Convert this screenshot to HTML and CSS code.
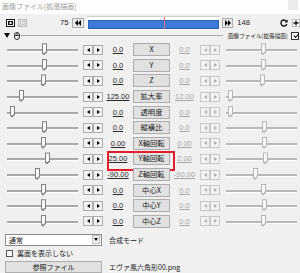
FILE: index.html
```html
<!DOCTYPE html>
<html>
<head>
    <meta charset="utf-8">
    <title>画像ファイル[拡張描画]</title>
    <link rel="stylesheet" href="styles.css">
</head>
<body>
    <div class="window">
        <div class="titlebar">
            <span class="title">画像ファイル[拡張描画]</span>
            <span class="close"></span>
        </div>

        <div class="timeline">
            <svg class="icon-scene" width="9" height="8" viewBox="0 0 9 8">
                <rect x="0.5" y="0.5" width="8" height="7" fill="#fff" stroke="#111"/>
                <rect x="2" y="2" width="5" height="4" fill="#111"/>
                <rect x="3.5" y="3" width="2" height="2" fill="#fff"/>
            </svg>
            <svg class="icon-frame" width="9" height="8" viewBox="0 0 9 8">
                <rect x="0.5" y="0.5" width="8" height="7" fill="#e4e4e4" stroke="#b8b8b8"/>
                <rect x="2.5" y="2.5" width="4" height="3" fill="none" stroke="#c8c8c8"/>
            </svg>
            <span class="frame-no start">75</span>
            <button class="seek prev"><i></i><i></i></button>
            <div class="track-bar">
                <div class="track-fill"></div>
                <span class="cursor" style="left: 77px"></span>
            </div>
            <button class="seek next"><i></i><i></i></button>
            <span class="frame-no end">148</span>
            <svg class="icon-refresh" width="8" height="8" viewBox="0 0 8 8">
                <path d="M6.6 2.6A3 3 0 1 0 6.8 5" fill="none" stroke="#111" stroke-width="1.4"/>
                <path d="M7.6 0.6V3.6H4.6Z" fill="#111"/>
            </svg>
            <svg class="icon-plus" width="8" height="8" viewBox="0 0 8 8">
                <rect x="0.5" y="0.5" width="7" height="7" fill="#fff" stroke="#c0c0c0"/>
                <path d="M4 1.5V6.5M1.5 4H6.5" stroke="#111" stroke-width="1.3"/>
            </svg>
        </div>

        <div class="layer">
            <span class="fold"></span>
            <svg class="icon-mouse" width="6" height="8" viewBox="0 0 6 8">
                <rect x="0.5" y="0.5" width="5" height="7" rx="2.5" fill="none" stroke="#333"/>
                <path d="M3 0.5V3.5M0.5 3.5H5.5" stroke="#333"/>
            </svg>
            <span class="layer-line"></span>
            <span class="layer-name">画像ファイル[拡張描画]</span>
            <span class="check checked"></span>
        </div>

        <div class="params">
            <div class="param">
                <div class="slider"><span class="thumb" style="left: 35px"></span></div>
                <div class="spin"><button class="l"></button><button class="r"></button></div>
                <span class="val">0.0</span>
                <button class="name">X</button>
                <span class="val off">0.0</span>
                <div class="spin off"><button class="l"></button><button class="r"></button></div>
                <div class="slider off"><span class="thumb" style="left: 35px"></span></div>
            </div>
            <div class="param">
                <div class="slider"><span class="thumb" style="left: 35px"></span></div>
                <div class="spin"><button class="l"></button><button class="r"></button></div>
                <span class="val">0.0</span>
                <button class="name">Y</button>
                <span class="val off">0.0</span>
                <div class="spin off"><button class="l"></button><button class="r"></button></div>
                <div class="slider off"><span class="thumb" style="left: 35px"></span></div>
            </div>
            <div class="param">
                <div class="slider"><span class="thumb" style="left: 34px"></span></div>
                <div class="spin"><button class="l"></button><button class="r"></button></div>
                <span class="val">0.0</span>
                <button class="name">Z</button>
                <span class="val off">0.0</span>
                <div class="spin off"><button class="l"></button><button class="r"></button></div>
                <div class="slider off"><span class="thumb" style="left: 34px"></span></div>
            </div>
            <div class="param">
                <div class="slider"><span class="thumb" style="left: 12px"></span></div>
                <div class="spin"><button class="l"></button><button class="r"></button></div>
                <span class="val">125.00</span>
                <button class="name">拡大率</button>
                <span class="val off">12.00</span>
                <div class="spin off"><button class="l"></button><button class="r"></button></div>
                <div class="slider off"><span class="thumb" style="left: 2px"></span></div>
            </div>
            <div class="param">
                <div class="slider"><span class="thumb" style="left: 3px"></span></div>
                <div class="spin"><button class="l"></button><button class="r"></button></div>
                <span class="val">0.0</span>
                <button class="name">透明度</button>
                <span class="val off">0.0</span>
                <div class="spin off"><button class="l"></button><button class="r"></button></div>
                <div class="slider off"><span class="thumb" style="left: 2px"></span></div>
            </div>
            <div class="param">
                <div class="slider"><span class="thumb" style="left: 35px"></span></div>
                <div class="spin"><button class="l"></button><button class="r"></button></div>
                <span class="val">0.0</span>
                <button class="name">縦横比</button>
                <span class="val off">0.0</span>
                <div class="spin off"><button class="l"></button><button class="r"></button></div>
                <div class="slider off"><span class="thumb" style="left: 36px"></span></div>
            </div>
            <div class="param">
                <div class="slider"><span class="thumb" style="left: 34px"></span></div>
                <div class="spin"><button class="l"></button><button class="r"></button></div>
                <span class="val">0.00</span>
                <button class="name">X軸回転</button>
                <span class="val off">0.00</span>
                <div class="spin off"><button class="l"></button><button class="r"></button></div>
                <div class="slider off"><span class="thumb" style="left: 36px"></span></div>
            </div>
            <div class="param marked">
                <div class="slider"><span class="thumb" style="left: 38px"></span></div>
                <div class="spin"><button class="l"></button><button class="r"></button></div>
                <span class="val">25.00</span>
                <button class="name">Y軸回転</button>
                <span class="val off">2.00</span>
                <div class="spin off"><button class="l"></button><button class="r"></button></div>
                <div class="slider off"><span class="thumb" style="left: 37px"></span></div>
            </div>
            <div class="param">
                <div class="slider"><span class="thumb" style="left: 28px"></span></div>
                <div class="spin"><button class="l"></button><button class="r"></button></div>
                <span class="val">-90.00</span>
                <button class="name">Z軸回転</button>
                <span class="val off">-90.00</span>
                <div class="spin off"><button class="l"></button><button class="r"></button></div>
                <div class="slider off"><span class="thumb" style="left: 27px"></span></div>
            </div>
            <div class="param">
                <div class="slider"><span class="thumb" style="left: 34px"></span></div>
                <div class="spin"><button class="l"></button><button class="r"></button></div>
                <span class="val">0.0</span>
                <button class="name">中心X</button>
                <span class="val off">0.0</span>
                <div class="spin off"><button class="l"></button><button class="r"></button></div>
                <div class="slider off"><span class="thumb" style="left: 35px"></span></div>
            </div>
            <div class="param">
                <div class="slider"><span class="thumb" style="left: 34px"></span></div>
                <div class="spin"><button class="l"></button><button class="r"></button></div>
                <span class="val">0.0</span>
                <button class="name">中心Y</button>
                <span class="val off">0.0</span>
                <div class="spin off"><button class="l"></button><button class="r"></button></div>
                <div class="slider off"><span class="thumb" style="left: 36px"></span></div>
            </div>
            <div class="param">
                <div class="slider"><span class="thumb" style="left: 34px"></span></div>
                <div class="spin"><button class="l"></button><button class="r"></button></div>
                <span class="val">0.0</span>
                <button class="name">中心Z</button>
                <span class="val off">0.0</span>
                <div class="spin off"><button class="l"></button><button class="r"></button></div>
                <div class="slider off"><span class="thumb" style="left: 35px"></span></div>
            </div>
        </div>

        <div class="bottom">
            <div class="bottom-row">
                <div class="select"><span>通常</span><span class="select-arrow"></span></div>
                <span class="caption">合成モード</span>
            </div>
            <div class="bottom-row">
                <span class="check"></span>
                <span class="check-label">裏面を表示しない</span>
            </div>
            <div class="bottom-row">
                <button class="file-btn">参照ファイル</button>
                <span class="caption">エヴァ風六角形00.png</span>
            </div>
        </div>
    </div>
</body>
</html>
```

FILE: styles.css
```css
* {
    margin: 0;
    padding: 0;
    box-sizing: border-box;
}

body {
    background: #f0f0f0;
    font-family: "Noto Sans CJK JP", "Liberation Sans", sans-serif;
    color: #1a1a1a;
}

button {
    font-family: inherit;
    color: inherit;
}

.window {
    width: 300px;
    height: 273px;
    overflow: hidden;
    background: #f0f0f0;
}

/* title bar */
.titlebar {
    height: 14px;
    background: #fdfdfd;
    display: flex;
    align-items: flex-start;
    padding-left: 2px;
}

.title {
    font-size: 7px;
    line-height: 13px;
    color: #9c9c9c;
}

.close {
    margin-left: auto;
    margin-right: 2px;
    width: 10px;
    height: 10px;
    background: #ebebeb;
}

/* frame bar */
.timeline {
    height: 17px;
    display: flex;
    align-items: center;
}

.icon-scene { margin-left: 6px; }
.icon-frame { margin-left: 3px; }

.frame-no {
    font-family: "Liberation Sans", sans-serif;
    font-size: 7.5px;
    color: #222;
}

.frame-no.start { margin-left: 33px; }
.frame-no.end { margin-left: 4px; }

.seek {
    width: 12px;
    height: 10px;
    border: 1px solid #adadad;
    background: #e8e8e8;
    display: flex;
    align-items: center;
    justify-content: center;
}

.seek i {
    width: 0;
    height: 0;
    border-top: 3px solid transparent;
    border-bottom: 3px solid transparent;
}

.seek.prev { margin-left: 4px; }
.seek.prev i { border-right: 3px solid #000; }
.seek.next { margin-left: 2px; width: 11px; }
.seek.next i { border-left: 3px solid #000; }

.track-bar {
    position: relative;
    margin-left: 3px;
    width: 133px;
    height: 14px;
    margin-top: 1px;
    background: #fff;
    border-top: 1px solid #d0d0d0;
    padding: 3px 1px 1px;
}

.track-fill {
    height: 100%;
    background: #3c79d9;
    border: 1px solid #2a5fb8;
}

.cursor {
    position: absolute;
    top: 0;
    bottom: 1px;
    width: 1px;
    background: #e56a7a;
}

.icon-refresh { margin-left: 30px; }
.icon-plus { margin-left: 4px; }

/* layer header */
.layer {
    height: 9px;
    display: flex;
    align-items: center;
}

.fold {
    margin-left: 4px;
    width: 0;
    height: 0;
    border-left: 3px solid transparent;
    border-right: 3px solid transparent;
    border-top: 5px solid #111;
}

.icon-mouse { margin-left: 4px; }

.layer-line {
    margin-left: 1px;
    width: 202px;
    height: 1px;
    background: #a8a8a8;
}

.layer-name {
    margin-left: 5px;
    font-size: 5.6px;
    color: #222;
    white-space: nowrap;
}

.check {
    width: 8px;
    height: 8px;
    border: 1px solid #333;
    background: #fff;
    position: relative;
}

.layer .check { margin-left: 3px; }

.check.checked::after {
    content: '';
    position: absolute;
    left: 1px;
    top: 0;
    width: 4px;
    height: 2px;
    border-left: 1.3px solid #000;
    border-bottom: 1.3px solid #000;
    transform: rotate(-45deg) translate(0, 1px);
}

/* parameter rows */
.params {
    margin-top: 2px;
    padding-left: 7px;
}

.param {
    position: relative;
    display: flex;
    align-items: center;
    height: 15.6px;
}

.param.marked::after {
    content: '';
    position: absolute;
    left: 100px;
    top: 0;
    width: 64px;
    height: 16px;
    border: 2px solid #e3202a;
}

.slider {
    position: relative;
    width: 71px;
    height: 13px;
}

.slider::before {
    content: '';
    position: absolute;
    left: 0;
    right: 0;
    top: 6px;
    height: 2px;
    background: #a8a8a8;
    border-bottom: 1px solid #fff;
}

.slider.off { margin-left: 6px; }
.slider.off::before { background: #b8b8b8; }

.thumb {
    position: absolute;
    top: 0;
    width: 5px;
    height: 12px;
    background: #808080;
    clip-path: polygon(0 0, 100% 0, 100% 75%, 40% 100%, 0 85%);
}

.thumb::after {
    content: '';
    position: absolute;
    left: 1px;
    top: 1px;
    width: 3px;
    height: 9px;
    background: #fafafa;
    clip-path: polygon(0 0, 100% 0, 100% 80%, 30% 100%, 0 90%);
}

.slider.off .thumb { background: #b4b4b4; }

.spin {
    margin-left: 5px;
    width: 20px;
    height: 10px;
    display: flex;
}

.spin.off { margin-left: 1px; }

.spin button {
    width: 10px;
    height: 10px;
    border: 1px solid #adadad;
    background: #f2f2f2;
    display: flex;
    align-items: center;
    justify-content: center;
}

.spin button::before {
    content: '';
    width: 0;
    height: 0;
    border-top: 2.5px solid transparent;
    border-bottom: 2.5px solid transparent;
}

.spin .l::before { border-right: 3px solid #000; }
.spin .r::before { border-left: 3px solid #000; }
.spin.off button { border-color: #c8c8c8; }
.spin.off .l::before { border-right-color: #b0b0b0; }
.spin.off .r::before { border-left-color: #b0b0b0; }

.val {
    width: 30px;
    text-align: center;
    font-family: "Liberation Sans", sans-serif;
    font-size: 7.5px;
    color: #2a2a2a;
    text-decoration: underline;
}

.val.off {
    width: 29px;
    color: #a8a8a8;
}

.name {
    width: 37px;
    height: 13px;
    border: 1px solid #adadad;
    background: #e1e1e1;
    font-size: 7.3px;
    line-height: 11px;
    white-space: nowrap;
}

/* bottom */
.bottom {
    margin-top: 4px;
    padding-left: 5px;
}

.bottom-row {
    display: flex;
    align-items: center;
    height: 13px;
}

.bottom-row + .bottom-row { margin-top: 0.5px; }

.select {
    width: 97px;
    height: 12px;
    border: 1px solid #8a8a8a;
    background: #fff;
    display: flex;
    align-items: center;
    justify-content: space-between;
    padding: 0 1px 0 3px;
    font-size: 7px;
}

.select-arrow {
    width: 8px;
    height: 9px;
    background: #f0f0f0;
    border: 1px solid #c0c0c0;
    display: flex;
    align-items: center;
    justify-content: center;
}

.select-arrow::before {
    content: '';
    border-left: 2.5px solid transparent;
    border-right: 2.5px solid transparent;
    border-top: 3px solid #000;
}

.caption {
    margin-left: 7px;
    font-size: 7px;
    white-space: nowrap;
}

.bottom .check {
    margin-left: 1px;
    width: 7px;
    height: 7px;
    border-color: #555;
}

.check-label {
    margin-left: 4px;
    font-size: 7px;
}

.file-btn {
    width: 97px;
    height: 12px;
    border: 1px solid #adadad;
    background: #e1e1e1;
    font-size: 7px;
    line-height: 10px;
}
```
